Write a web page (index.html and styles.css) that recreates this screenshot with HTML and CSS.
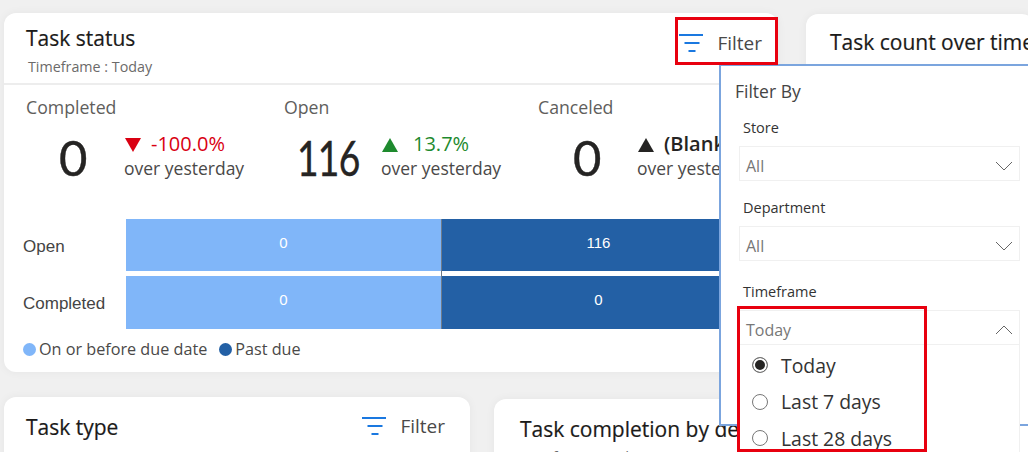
FILE: index.html
```html
<!DOCTYPE html>
<html lang="en">
<head>
   <meta charset="UTF-8">
   <meta name="viewport" content="width=device-width, initial-scale=1.0">
   <title>Task status</title>
   <link rel="stylesheet" href="styles.css">
</head>
<body>
   <div class="page">

      <div class="row row-top">
         <section class="card card-status">
            <header class="status-head">
               <div>
                  <h2 class="card-title">Task status</h2>
                  <div class="timeframe">Timeframe : Today</div>
               </div>
               <div class="filter-btn filter-btn-top">
                  <svg class="filter-icon" width="26" height="18" viewBox="0 0 26 18"><path d="M1 1h24M6.500 9h15M10.500 17h7" stroke="#1a78e0" stroke-width="2" fill="none"/></svg>
                  <span>Filter</span>
               </div>
            </header>

            <div class="kpis">
               <div class="kpi kpi-completed">
                  <div class="kpi-label">Completed</div>
                  <div class="kpi-body">
                     <div class="kpi-num">0</div>
                     <div class="kpi-delta">
                        <div class="delta-top red"><i class="tri tri-down"></i><span>-100.0%</span></div>
                        <div class="delta-sub">over yesterday</div>
                     </div>
                  </div>
               </div>
               <div class="kpi kpi-open">
                  <div class="kpi-label">Open</div>
                  <div class="kpi-body">
                     <div class="kpi-num"><span class="num-narrow">116</span></div>
                     <div class="kpi-delta">
                        <div class="delta-top green"><i class="tri tri-up"></i><span>13.7%</span></div>
                        <div class="delta-sub">over yesterday</div>
                     </div>
                  </div>
               </div>
               <div class="kpi kpi-canceled">
                  <div class="kpi-label">Canceled</div>
                  <div class="kpi-body">
                     <div class="kpi-num">0</div>
                     <div class="kpi-delta">
                        <div class="delta-top dark"><i class="tri tri-up"></i><span class="blank">(Blank)</span></div>
                        <div class="delta-sub">over yesterday</div>
                     </div>
                  </div>
               </div>
            </div>

            <div class="chart">
               <div class="chart-row chart-row-first">
                  <div class="chart-label">Open</div>
                  <div class="bar bar-light">0</div>
                  <div class="bar bar-dark">116</div>
               </div>
               <div class="chart-row">
                  <div class="chart-label">Completed</div>
                  <div class="bar bar-light">0</div>
                  <div class="bar bar-dark">0</div>
               </div>
            </div>

            <div class="legend">
               <span class="legend-item"><i class="dot dot-light"></i>On or before due date</span>
               <span class="legend-item"><i class="dot dot-dark"></i>Past due</span>
            </div>
         </section>

         <section class="card card-count">
            <h2 class="card-title">Task count over time</h2>
            <div class="timeframe timeframe-tight">Timeframe : Today</div>
         </section>
      </div>

      <div class="row row-bottom">
         <section class="card card-type">
            <h2 class="card-title">Task type</h2>
            <div class="filter-btn filter-btn-low">
               <svg class="filter-icon" width="26" height="18" viewBox="0 0 26 18"><path d="M1 1h24M6.500 9h15M10.500 17h7" stroke="#1a78e0" stroke-width="2" fill="none"/></svg>
               <span>Filter</span>
            </div>
         </section>
         <section class="card card-completion">
            <h2 class="card-title">Task completion by department</h2>
            <div class="timeframe timeframe-tight">Timeframe : Today</div>
         </section>
      </div>

   </div>

   <!-- filter flyout -->
   <aside class="flyout">
      <div class="flyout-title">Filter By</div>

      <div class="field">
         <label class="field-label">Store</label>
         <div class="select"><span>All</span>
            <svg width="18" height="10" viewBox="0 0 18 10"><path d="M1 1l8 8 8-8" stroke="#666" fill="none"/></svg>
         </div>
      </div>

      <div class="field field-dept">
         <label class="field-label">Department</label>
         <div class="select"><span>All</span>
            <svg width="18" height="10" viewBox="0 0 18 10"><path d="M1 1l8 8 8-8" stroke="#666" fill="none"/></svg>
         </div>
      </div>

      <div class="field field-time">
         <label class="field-label">Timeframe</label>
         <div class="select"><span>Today</span>
            <svg width="18" height="10" viewBox="0 0 18 10"><path d="M1 9l8-8 8 8" stroke="#666" fill="none"/></svg>
         </div>
         <ul class="options">
            <li class="option"><i class="radio radio-on"></i>Today</li>
            <li class="option"><i class="radio"></i>Last 7 days</li>
            <li class="option"><i class="radio"></i>Last 28 days</li>
         </ul>
      </div>
   </aside>

   <!-- red callouts -->
   <div class="callout callout-filter"></div>
   <div class="callout callout-time"></div>
</body>
</html>
```

FILE: styles.css
```css
* {
   box-sizing: border-box;
}

html, body {
   height: 100%;
}

body {
   margin: 0;
   background: #f0f0f0;
   overflow: hidden;
   position: relative;
   font-family: "Open Sans", "Noto Sans", sans-serif;
   color: #252423;
}

.page {
   height: 452px;
   overflow: hidden;
   padding: 13px 0 0 4px;
}

.row {
   display: flex;
}

.row-top {
   gap: 28px;
   height: 384px;
}

.row-bottom {
   gap: 24px;
}

.card {
   background: #fff;
   border-radius: 12px;
   box-shadow: 0 0 10px rgba(0, 0, 0, .05);
}

.card-title {
   margin: 0;
   font-size: 21px;
   font-weight: 400;
   line-height: 27px;
   color: #1b1a19;
   white-space: nowrap;
   -webkit-text-stroke: .2px #1b1a19;
}

.card-status {
   width: 774px;
   height: 359px;
   flex: none;
}

.status-head {
   height: 72px;
   border-bottom: 2px solid #ededed;
   padding: 12px 16px 0 22px;
   display: flex;
   justify-content: space-between;
}

.timeframe {
   font-size: 14.300px;
   line-height: 18px;
   color: #6b6a69;
   margin: 6px 0 0 2px;
   white-space: nowrap;
}

.timeframe-tight {
   margin: 5px 0 0;
}

.filter-btn {
   display: flex;
   align-items: center;
   gap: 13px;
   font-size: 19px;
   color: #4a4948;
}

.filter-btn-top {
   align-self: flex-start;
   margin-top: 5px;
}

.filter-btn-low {
   margin-top: -1px;
}

.filter-icon {
   flex: none;
}

.kpis {
   display: flex;
   padding: 10px 0 0 22px;
   height: 134px;
}

.kpi-completed {
   width: 258px;
}

.kpi-open {
   width: 254px;
}

.kpi-label {
   font-size: 17.700px;
   line-height: 24px;
   color: #605e5c;
}

.kpi-body {
   display: flex;
   align-items: flex-start;
   margin-top: 4px;
}

.kpi-num {
   flex: none;
   margin-top: 4px;
   font-family: "Lato", "Open Sans", sans-serif;
   font-size: 49px;
   line-height: 60px;
   color: #252423;
   -webkit-text-stroke: .4px #252423;
}

.kpi-completed .kpi-num {
   width: 98px;
   padding-left: 33px;
}

.kpi-open .kpi-num {
   width: 97px;
   padding-left: 13px;
}

.kpi-canceled .kpi-num {
   width: 99px;
   padding-left: 35px;
}

.num-narrow {
   display: inline-block;
   letter-spacing: -1px;
   transform: scaleX(.76);
   transform-origin: left center;
}

.kpi-delta {
   margin-top: 8px;
}

.delta-top {
   display: flex;
   align-items: center;
   font-size: 20px;
   height: 24px;
}

.delta-top.red { color: #d90012; }
.delta-top.green { color: #1e8a2e; }
.delta-top.dark { color: #252423; font-weight: 600; }

.delta-sub {
   margin-top: 1px;
   font-size: 17.500px;
   line-height: 24px;
   color: #4a4948;
   white-space: nowrap;
}

.tri {
   display: block;
   width: 0;
   height: 0;
   margin: 4px 10px 0 1px;
   border-left: 8px solid transparent;
   border-right: 8px solid transparent;
}

.tri-down { border-top: 14px solid currentColor; }
.tri-up { border-bottom: 14px solid currentColor; }

.green .tri {
   margin-right: 15px;
}

.chart {
   position: relative;
   display: flex;
   flex-direction: column;
   gap: 5px;
}

/* thin rule between the two colours, runs through the gap too */
.chart::after {
   content: '';
   position: absolute;
   left: 437px;
   top: 0;
   bottom: 0;
   width: 1px;
   background: #6f7b88;
}

.chart-row {
   display: flex;
   height: 53px;
}

.chart-row-first {
   height: 52px;
}

.chart-label {
   width: 122px;
   padding: 18px 0 0 19px;
   font-family: "Liberation Sans", sans-serif;
   font-size: 17px;
   color: #444;
}

.bar {
   display: flex;
   justify-content: center;
   width: 315px;
   padding-top: 15px;
   font-family: "Liberation Sans", sans-serif;
   font-size: 15px;
   color: #fff;
}

.bar-light {
   background: #80b6f9;
}

.bar-dark {
   background: #2360a5;
}

.legend {
   display: flex;
   gap: 12px;
   padding: 10px 0 0 19px;
   font-size: 16.200px;
   line-height: 20px;
   color: #4a4948;
}

.legend-item {
   display: flex;
   align-items: center;
   gap: 3px;
}

.dot {
   width: 13px;
   height: 13px;
   border-radius: 50%;
}

.dot-light { background: #80b6f9; }
.dot-dark { background: #2360a5; }

.card-count {
   flex: 1;
   height: 359px;
   margin-top: 1px;
   padding: 15px 0 0 24px;
}

.card-type {
   width: 466px;
   height: 100px;
   flex: none;
   padding: 17px 25px 0 22px;
   display: flex;
   justify-content: space-between;
   align-items: flex-start;
}

.card-completion {
   flex: 1;
   height: 100px;
   margin-top: 2px;
   padding: 17px 0 0 26px;
}

.flyout {
   position: absolute;
   left: 719px;
   top: 64px;
   width: 400px;
   height: 362px;
   background: #fff;
   border: 2px solid #7ba5de;
   padding: 13px 0 0 14px;
}

.flyout-title {
   font-size: 17.500px;
   line-height: 24px;
   color: #444;
}

.field {
   width: 281px;
   margin: 0 0 0 4px;
}

.field-label {
   display: block;
   font-size: 14.500px;
   font-weight: 500;
   line-height: 20px;
   color: #333;
   padding-left: 4px;
   margin-top: 15px;
}

.field-dept .field-label {
   margin-top: 17px;
}

.field-time .field-label {
   margin-top: 21px;
}

.select {
   height: 35px;
   margin-top: 8px;
   border: 1px solid #f0f0f0;
   display: flex;
   align-items: center;
   justify-content: space-between;
   padding: 4px 6px 0 6px;
   font-size: 16px;
   color: #777;
}

.options {
   position: absolute;
   list-style: none;
   margin: 0;
   padding: 2px 0 0 12px;
   width: 281px;
   height: 120px;
   background: #fff;
   border-left: 1px solid #f0f0f0;
   border-right: 1px solid #f0f0f0;
   font-size: 19.400px;
   color: #333;
}

.option {
   display: flex;
   align-items: center;
   gap: 13px;
   height: 36.500px;
}

.radio {
   width: 16px;
   height: 16px;
   border-radius: 50%;
   border: 1px solid #777;
   background: #fff;
}

.radio-on {
   background: #252423;
   box-shadow: inset 0 0 0 2px #fff;
}

.callout {
   position: absolute;
   border: 3px solid #e8000f;
}

.callout-filter {
   left: 675px;
   top: 17px;
   width: 103px;
   height: 48px;
}

.callout-time {
   left: 737px;
   top: 306px;
   width: 190px;
   height: 146px;
}
```
